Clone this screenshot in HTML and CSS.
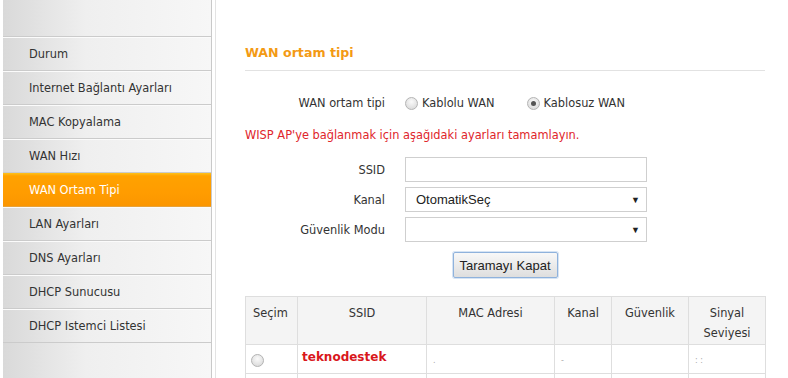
FILE: index.html
```html
<!DOCTYPE html>
<html lang="tr">
<head>
<meta charset="utf-8">
<title>WAN ortam tipi</title>
<link rel="stylesheet" href="styles.css">
</head>
<body>
<div class="page">
  <nav class="sidebar">
    <div class="side-top"></div>
    <ul class="menu">
      <li class="item">Durum</li>
      <li class="item">Internet Bağlantı Ayarları</li>
      <li class="item">MAC Kopyalama</li>
      <li class="item">WAN Hızı</li>
      <li class="item active">WAN Ortam Tipi</li>
      <li class="item">LAN Ayarları</li>
      <li class="item">DNS Ayarları</li>
      <li class="item">DHCP Sunucusu</li>
      <li class="item">DHCP Istemci Listesi</li>
    </ul>
    <div class="side-bottom"></div>
  </nav>
  <div class="divider"></div>
  <main class="content">
    <h2 class="title">WAN ortam tipi</h2>
    <div class="type-row">
      <span class="type-label">WAN ortam tipi</span>
      <label class="opt"><span class="radio"></span>Kablolu WAN</label>
      <label class="opt opt-second"><span class="radio checked"></span>Kablosuz WAN</label>
    </div>
    <p class="notice">WISP AP'ye bağlanmak için aşağıdaki ayarları tamamlayın.</p>
    <div class="form">
      <span class="f-label">SSID</span>
      <div class="field"></div>
      <span class="f-label">Kanal</span>
      <div class="field select"><span class="sel-text">OtomatikSeç</span><span class="arrow">▼</span></div>
      <span class="f-label">Güvenlik Modu</span>
      <div class="field select"><span class="sel-text"></span><span class="arrow">▼</span></div>
    </div>
    <div class="btn-row"><button class="btn">Taramayı Kapat</button></div>
    <table class="scan">
      <colgroup>
        <col class="c1"><col class="c2"><col class="c3"><col class="c4"><col class="c5"><col class="c6">
      </colgroup>
      <thead>
        <tr>
          <th>Seçim</th><th>SSID</th><th>MAC Adresi</th><th>Kanal</th><th>Güvenlik</th><th>Sinyal<br>Seviyesi</th>
        </tr>
      </thead>
      <tbody>
        <tr>
          <td class="sel"><span class="radio"></span></td>
          <td class="ssid">teknodestek</td>
          <td class="dim">.</td>
          <td class="dim">-</td>
          <td></td>
          <td class="dim">: :</td>
        </tr>
        <tr class="next">
          <td></td><td></td><td></td><td></td><td></td><td></td>
        </tr>
      </tbody>
    </table>
  </main>
</div>
</body>
</html>
```

FILE: styles.css
```css
* { box-sizing: border-box; }

html, body {
  margin: 0;
  padding: 0;
  background: #fff;
  height: 100%;
  overflow: hidden;
}

body {
  font-family: "DejaVu Sans", Verdana, sans-serif;
  font-size: 11.4px;
  color: #333;
}

.page {
  display: flex;
  height: 378px;
  overflow: hidden;
}

.sidebar {
  width: 209px;
  margin-left: 3px;
  border-right: 1px solid #c9c9c9;
  display: flex;
  flex-direction: column;
  background: linear-gradient(to right, #d9d9d9, #efefef 40%, #f7f7f7);
}

.side-top {
  height: 37px;
  border-bottom: 1px solid #cbcbcb;
}

.menu {
  list-style: none;
  margin: 0;
  padding: 0;
}

.item {
  height: 34px;
  line-height: 32px;
  padding: 1px 0 0 26px;
  border-bottom: 1px solid #cbcbcb;
  box-shadow: inset 0 1px 0 #fbfbfb;
  color: #333;
  white-space: nowrap;
}

.item.active {
  background: linear-gradient(to bottom, #ffc21a 0, #ffa200 3px, #ff9c00 60%, #fb9600 100%);
  color: #fff;
  border-bottom-color: #e7a23a;
  box-shadow: none;
}

.side-bottom {
  flex: 1;
}

.divider {
  width: 1px;
  margin-left: 3px;
  background: #e3e3e3;
}

.content {
  width: 520px;
  margin-left: 29px;
}

.title {
  margin: 0;
  padding: 44px 0 8px;
  font-size: 12.6px;
  line-height: 18px;
  font-weight: bold;
  color: #f39a14;
  border-bottom: 1px solid #e2e2e2;
}

.type-row {
  display: flex;
  align-items: center;
  margin-top: 22px;
  height: 20px;
}

.type-label {
  width: 140px;
  text-align: right;
  color: #333;
}

.opt {
  display: flex;
  align-items: center;
  margin-left: 20px;
}

.opt-second {
  margin-left: 32px;
}

.radio {
  display: inline-block;
  width: 13px;
  height: 13px;
  border-radius: 50%;
  border: 1px solid #b4b4b4;
  background: radial-gradient(circle at 50% 35%, #fafafa, #dcdcdc 80%);
  margin-right: 4px;
  position: relative;
}

.radio.checked::after {
  content: "";
  position: absolute;
  left: 3px;
  top: 3px;
  width: 5px;
  height: 5px;
  border-radius: 50%;
  background: #555;
}

.notice {
  margin: 12px 0 0;
  line-height: 20px;
  color: #e0252b;
}

.form {
  display: grid;
  grid-template-columns: 140px 242px;
  column-gap: 20px;
  row-gap: 5px;
  margin-top: 12px;
  align-items: center;
}

.f-label {
  text-align: right;
}

.field {
  height: 25px;
  border: 1px solid #cfcfcf;
  background: #fff;
}

.select {
  display: flex;
  align-items: center;
  justify-content: space-between;
  padding: 0 6px 0 10px;
  font-family: "Liberation Sans", Arial, sans-serif;
  font-size: 13px;
  color: #222;
}

.arrow {
  font-size: 9px;
  color: #222;
}

.btn-row {
  text-align: center;
  margin-top: 10px;
  height: 26px;
}

.btn {
  height: 26px;
  width: 105px;
  padding: 0;
  font-family: "Liberation Sans", Arial, sans-serif;
  font-size: 13px;
  color: #222;
  border: 1px solid #8fb2dc;
  border-radius: 2px;
  background: linear-gradient(to bottom, #f8f8f8, #dedede);
  box-shadow: 0 0 0 1px #d6e4f4;
}

.scan {
  margin-top: 18px;
  width: 520px;
  border-collapse: collapse;
  table-layout: fixed;
}

.c1 { width: 52px; }
.c2 { width: 129px; }
.c3 { width: 128px; }
.c4 { width: 57px; }
.c5 { width: 77px; }
.c6 { width: 77px; }

.scan th,
.scan td {
  border: 1px solid #dedede;
  vertical-align: top;
}

.scan th {
  height: 48px;
  background: #f4f4f4;
  font-weight: normal;
  text-align: center;
  padding: 6px 2px 0;
  line-height: 20px;
  color: #333;
}

.scan th:first-child {
  text-align: left;
  padding-left: 7px;
}

.scan td {
  height: 29px;
  padding: 4px 6px 0;
  line-height: 16px;
}

.scan td.sel {
  padding: 9px 0 0 5px;
}

.scan td.ssid {
  font-weight: bold;
  color: #d9171c;
  font-size: 12px;
  padding-left: 4px;
}

.scan td.dim {
  color: #aaa;
  font-size: 8px;
  padding-top: 8px;
}
```
